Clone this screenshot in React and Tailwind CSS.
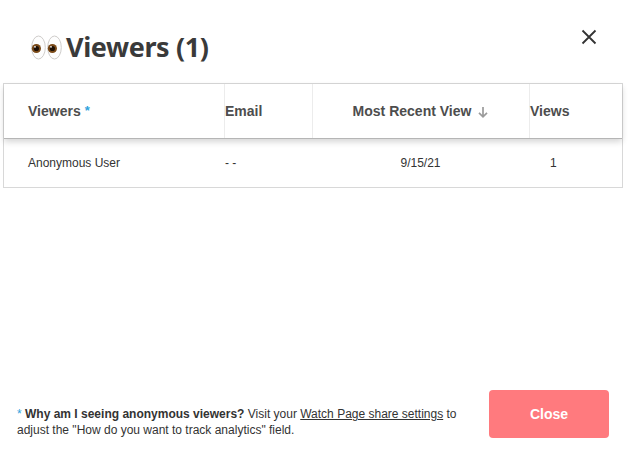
import React from "react";

function Eye() {
  return (
    <svg width="15" height="25" viewBox="0 0 15 25" className="block">
      <ellipse cx="7.5" cy="12.5" rx="6.8" ry="11.5" fill="#fdfdfd" stroke="#cfcdcb" strokeWidth="1" />
      <circle cx="5.4" cy="13.5" r="4.6" fill="#7a4a18" />
      <circle cx="5.4" cy="13.5" r="2.6" fill="#1c0f05" />
      <circle cx="4" cy="11.8" r="0.9" fill="#fff" />
    </svg>
  );
}

function Head({ className = "", children }) {
  return (
    <div className={`flex items-center h-full text-[14px] font-bold text-[#4d4d4d] ${className}`}>
      {children}
    </div>
  );
}

const cols = "grid grid-cols-[220px_88px_217px_1fr]";

export default function App() {
  return (
    <div className="w-[630px] h-[456px] bg-white flex flex-col overflow-hidden font-['Liberation_Sans',Arial,sans-serif]">
      <div className="h-[83px] flex items-start justify-between pl-[31px] pr-[33px] pt-[28px] shrink-0">
        <h1 className="flex items-center h-[38px] text-[27px] leading-[38px] font-bold text-[#3a3a3a] font-['Noto_Sans',sans-serif] tracking-[-0.4px]">
          <span className="flex gap-px">
            <Eye />
            <Eye />
          </span>
          <span className="ml-[4px]">Viewers (1)</span>
        </h1>
        <svg width="16" height="16" viewBox="0 0 16 16" className="mt-[1px]" fill="none" stroke="#333" strokeWidth="1.8">
          <path d="M1.5 1.5 L14.5 14.5 M14.5 1.5 L1.5 14.5" />
        </svg>
      </div>

      <div className="ml-[3px] w-[620px] h-[105px] border border-[#d8d8d8] shrink-0">
        <div className={`${cols} h-[55px] border-b border-[#b5b5b5] shadow-[0_3px_6px_rgba(0,0,0,0.16)]`}>
          <Head className="pl-[24px]">
            Viewers <span className="text-[#2ea3dd] text-[13px] ml-1">*</span>
          </Head>
          <Head className="border-l border-[#ececec]">Email</Head>
          <Head className="border-l border-[#ececec] justify-center">
            Most Recent View
            <svg width="12" height="12" viewBox="0 0 12 12" className="ml-[6px] mt-[2px]" fill="none" stroke="#9b9b9b" strokeWidth="1.7">
              <path d="M6 1 V10.5 M2 6.8 L6 10.8 L10 6.8" />
            </svg>
          </Head>
          <Head className="border-l border-[#ececec]">Views</Head>
        </div>
        <div className={`${cols} h-[48px] items-center text-[12px] text-[#333]`}>
          <div className="pl-[24px]">Anonymous User</div>
          <div className="pl-px">- -</div>
          <div className="text-center">9/15/21</div>
          <div className="pl-[21px]">1</div>
        </div>
      </div>

      <div className="flex-1 flex items-start justify-between pl-[17px] pr-[21px] pt-[202px]">
        <p className="w-[445px] mt-[16px] text-[12px] leading-[16px] text-[#333]">
          <span className="text-[#2ea3dd]">*</span> <b>Why am I seeing anonymous viewers?</b> Visit your{" "}
          <span className="underline">Watch Page share settings</span> to adjust the "How do you want to track analytics" field.
        </p>
        <button className="w-[120px] h-[48px] rounded-[4px] bg-[#ff7a7e] text-white text-[14px] font-bold">
          Close
        </button>
      </div>
    </div>
  );
}
